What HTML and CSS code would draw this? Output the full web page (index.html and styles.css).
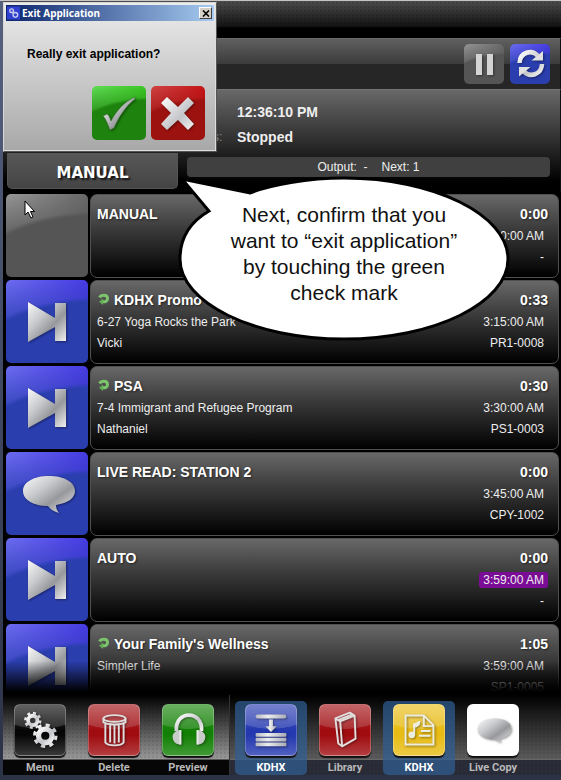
FILE: index.html
```html
<!DOCTYPE html>
<html lang="en">
<head>
<meta charset="UTF-8" />
<meta name="viewport" content="width=device-width, initial-scale=1.0" />
<title>Exit Application</title>
<link rel="stylesheet" href="styles.css">
</head>
<body>

<svg class="defs" width="0" height="0" aria-hidden="true">
  <defs>
    <linearGradient id="silver" x1="0" y1="0" x2="1" y2="1">
      <stop offset="0" stop-color="#fafafa" />
      <stop offset=".35" stop-color="#c9cacd" />
      <stop offset=".62" stop-color="#97989c" />
      <stop offset="1" stop-color="#f2f2f2" />
    </linearGradient>
    <linearGradient id="silverBar" x1="0" y1="0" x2="1" y2="0">
      <stop offset="0" stop-color="#b4b6c0" />
      <stop offset=".4" stop-color="#eeeeee" />
      <stop offset="1" stop-color="#a8aab4" />
    </linearGradient>
    <linearGradient id="silverLight" x1="0" y1="0" x2="1" y2="1">
      <stop offset="0" stop-color="#ffffff" />
      <stop offset=".6" stop-color="#c4c5c9" />
      <stop offset="1" stop-color="#f4f4f4" />
    </linearGradient>
    <symbol id="skip" viewBox="0 0 82 83">
      <path fill="url(#silver)" d="M22 22L49 38V23H60V61H49V47L22 62Z" />
    </symbol>
    <symbol id="talk" viewBox="0 0 82 83">
      <path fill="url(#silver)" d="M43 24C58 24 69 30 69 39C69 46 62 51 50 53C50 56 51 59 53 61C47 59 44 57 42 54C28 54 17 48 17 39C17 30 28 24 43 24Z" />
    </symbol>
    <symbol id="loop" viewBox="0 0 12 12">
      <path fill="none" stroke="#7cc46c" stroke-width="3" d="M1.600 4.500C3 1.500 9.500 1 9.500 5.500C9.500 8.500 7 9 4.500 8.500" />
      <path fill="#5fae52" d="M5 5.500V12L1 8.800Z" />
    </symbol>
  </defs>
</svg>

<div class="app">
  <div class="topbar"></div>

  <header class="header">
    <button class="glossy gray small" aria-label="Pause">
      <svg viewBox="0 0 40 40"><path fill="#d4d4d4" d="M12 10h6v21h-6zM23 10h6v21h-6z" /></svg>
    </button>
    <button class="glossy blue small" aria-label="Refresh">
      <svg viewBox="0 0 40 40">
        <path fill="none" stroke="url(#silverLight)" stroke-width="4.500" d="M9.500 19C10 8 22 5 28 12M32 20C31.500 31 19.500 34 13.500 27" />
        <path fill="#e0e0e0" d="M33 7V16.500H21.500ZM9 32.500V23H20.500Z" />
      </svg>
    </button>
  </header>

  <section class="info">
    <dl class="status">
      <dt>Time:</dt><dd>12:36:10 PM</dd>
      <dt>Status:</dt><dd>Stopped</dd>
    </dl>
    <div class="mode-row">
      <div class="mode">MANUAL</div>
      <div class="output"><span>Output:&nbsp; -</span><span>Next: 1</span></div>
    </div>
  </section>

  <ul class="playlist">
    <li class="row">
      <button class="glossy gray" aria-label="Manual"></button>
      <div class="card">
        <div class="details"><h2>MANUAL</h2></div>
        <div class="times"><b>0:00</b><span>3:00:00 AM</span><span>-</span></div>
      </div>
    </li>
    <li class="row">
      <button class="glossy blue" aria-label="Play next"><svg><use href="#skip" /></svg></button>
      <div class="card">
        <div class="details">
          <h2><svg class="loop"><use href="#loop" /></svg>KDHX Promo</h2>
          <p>6-27 Yoga Rocks the Park</p>
          <p>Vicki</p>
        </div>
        <div class="times"><b>0:33</b><span>3:15:00 AM</span><span>PR1-0008</span></div>
      </div>
    </li>
    <li class="row">
      <button class="glossy blue" aria-label="Play next"><svg><use href="#skip" /></svg></button>
      <div class="card">
        <div class="details">
          <h2><svg class="loop"><use href="#loop" /></svg>PSA</h2>
          <p>7-4 Immigrant and Refugee Program</p>
          <p>Nathaniel</p>
        </div>
        <div class="times"><b>0:30</b><span>3:30:00 AM</span><span>PS1-0003</span></div>
      </div>
    </li>
    <li class="row">
      <button class="glossy blue" aria-label="Read copy"><svg><use href="#talk" /></svg></button>
      <div class="card">
        <div class="details"><h2>LIVE READ: STATION 2</h2></div>
        <div class="times"><b>0:00</b><span>3:45:00 AM</span><span>CPY-1002</span></div>
      </div>
    </li>
    <li class="row">
      <button class="glossy blue" aria-label="Play next"><svg><use href="#skip" /></svg></button>
      <div class="card">
        <div class="details"><h2>AUTO</h2></div>
        <div class="times"><b>0:00</b><span class="late">3:59:00 AM</span><span>-</span></div>
      </div>
    </li>
    <li class="row">
      <button class="glossy blue" aria-label="Play next"><svg><use href="#skip" /></svg></button>
      <div class="card">
        <div class="details">
          <h2><svg class="loop"><use href="#loop" /></svg>Your Family's Wellness</h2>
          <p>Simpler Life</p>
        </div>
        <div class="times"><b>1:05</b><span>3:59:00 AM</span><span>SP1-0005</span></div>
      </div>
    </li>
  </ul>

  <nav class="toolbar">
    <div class="tools main-tools">
      <button class="tool">
        <span class="tile black"><svg viewBox="0 0 52 52">
          <g fill="none" stroke="url(#silverLight)">
            <circle cx="18.500" cy="16" r="4.800" stroke-width="4" />
            <circle cx="18.500" cy="16" r="7.500" stroke-width="3" stroke-dasharray="2.945 2.945" />
            <circle cx="31.500" cy="32" r="7" stroke-width="5.500" />
            <circle cx="31.500" cy="32" r="11" stroke-width="3.500" stroke-dasharray="4.320 4.320" />
          </g>
        </svg></span>
        Menu
      </button>
      <button class="tool">
        <span class="tile red"><svg viewBox="0 0 52 52">
          <g fill="none" stroke="#dedede" stroke-width="2">
            <ellipse cx="26.500" cy="14" rx="11.500" ry="3.500" />
            <path d="M15 14V18C19 21 34 21 38 18V14M17 19V39C20 43 33 43 36 39V19M22 21V39M26.500 21V40M31 21V39" />
          </g>
        </svg></span>
        Delete
      </button>
      <button class="tool">
        <span class="tile green"><svg viewBox="0 0 52 52">
          <path fill="none" stroke="url(#silverLight)" stroke-width="4" d="M14 27C12 5 42 5 40 27" />
          <path fill="#c8ccc8" d="M19 26V41C13 42 10 37 10 33C10 29 14 26 19 26ZM35 26V41C41 42 44 37 44 33C44 29 40 26 35 26Z" />
          <path stroke="#e8e8e8" stroke-width="2" d="M18 26V41M36 26V41" />
        </svg></span>
        Preview
      </button>
    </div>
    <div class="tools panel-tools">
      <button class="tool selected">
        <span class="tile blue-tile"><svg viewBox="0 0 52 52">
          <g fill="url(#silverBar)">
            <rect x="10" y="10" width="32" height="4" rx="2" />
            <rect x="10" y="29" width="32" height="4" rx="1" />
            <rect x="10" y="34" width="32" height="4" rx="1" />
            <rect x="10" y="39" width="32" height="4" rx="1" />
            <path d="M24 15H28V22H32L26 28L20 22H24Z" />
          </g>
        </svg></span>
        KDHX
      </button>
      <button class="tool">
        <span class="tile red"><svg viewBox="0 0 52 52">
          <path fill="none" stroke="#e2dede" stroke-width="2" stroke-linejoin="round" d="M16 14L31 8L36 11L37 35L23 43L19 40ZM16 14L21 17L23 43M21 17L36 11M18 16L33 10" />
        </svg></span>
        Library
      </button>
      <button class="tool selected">
        <span class="tile yellow"><svg viewBox="0 0 52 52">
          <path fill="none" stroke="#ededdf" stroke-width="2" d="M12 11H31L41 21V41H12ZM31 11V22H41M28 27H38M26 32H38" />
          <path fill="none" stroke="#ededdf" stroke-width="2" d="M21 31V20C24 20 26 19 27 17" />
          <path fill="#ededdf" d="M20 20L27 16V20C25 23 23 23 20 24Z" />
          <circle cx="18.500" cy="31" r="3.500" fill="#ededdf" />
        </svg></span>
        KDHX
      </button>
      <button class="tool">
        <span class="tile white"><svg viewBox="0 0 52 52">
          <path fill="url(#silver)" d="M28 14C38 14 45 18 45 25C45 30 40 34 33 35C33 37 34 38 35 39C31 38 29 37 28 36C18 36 10 32 10 25C10 18 18 14 28 14Z" />
        </svg></span>
        Live Copy
      </button>
    </div>
  </nav>
</div>

<div class="dialog" role="dialog" aria-labelledby="dialogTitle">
  <div class="titlebar">
    <svg class="app-icon" viewBox="0 0 14 14">
      <rect width="14" height="14" fill="#3040d0" />
      <g fill="none" stroke="#c8ccec" stroke-width="1.500"><circle cx="5" cy="4.500" r="2" /><circle cx="9" cy="9" r="2.500" /></g>
    </svg>
    <h1 id="dialogTitle">Exit Application</h1>
    <button class="close" aria-label="Close">
      <svg viewBox="0 0 8 7"><path fill="none" stroke="#000" stroke-width="1.600" d="M1 0.500L7 6.500M7 0.500L1 6.500" /></svg>
    </button>
  </div>
  <p class="question">Really exit application?</p>
  <div class="answers">
    <button class="glossy green answer" aria-label="Yes">
      <svg viewBox="0 0 54 54"><path fill="url(#silver)" stroke="#2a6a1c" stroke-width=".5" d="M11 30L15 28C17 29 18 32 19 35C25 24 32 16 43 11L43 13C33 21 27 31 22 42L18 44C16 39 14 33 11 30Z" /></svg>
    </button>
    <button class="glossy crimson answer" aria-label="No">
      <svg viewBox="0 0 54 54"><path fill="url(#silverLight)" d="M16 11L27 21L37 11L43 17L33 27L43 38L37 44L27 34L16 44L10 38L20 27L10 17Z" /></svg>
    </button>
  </div>
</div>

<div class="bubble">
  <svg viewBox="0 0 334 170" aria-hidden="true">
    <path fill="#fff" stroke="#000" stroke-width="3" stroke-linejoin="miter" d="M4 6L72 20C92 12 130 5 166 5C256 5 330 42 330 86C330 130 256 166 166 166C76 166 2 130 2 86C2 66 12 49 31 38Z" />
  </svg>
  <p>Next, confirm that you want to “exit application” by touching the green check mark</p>
</div>

<svg class="cursor" viewBox="0 0 12 20" aria-hidden="true">
  <path fill="#fff" stroke="#000" d="M1 1V15L4 12L7 18L9 17L6.500 11.500H10.500Z" />
</svg>

</body>
</html>
```
FILE: styles.css
```css
* {
  box-sizing: border-box;
}
body {
  margin: 0;
  background: linear-gradient(#55617f, #2c3246);
  font-family: "Liberation Sans", Arial, sans-serif;
  font-size: 12px;
  color: #eee;
}
button {
  border: none;
  padding: 0;
  font: inherit;
  color: inherit;
  cursor: pointer;
}
h1, h2, p, ul, dl, dd {
  margin: 0;
  padding: 0;
}
.defs {
  position: absolute;
}
.app {
  display: flex;
  flex-direction: column;
  height: 100vh;
  min-height: 500px;
  padding: 0 0 5px 3px;
  border-top: 1px solid #c4c4c4;
}
.topbar {
  flex: none;
  height: 37px;
  background: radial-gradient(rgba(0, 0, 0, 0.12) 1px, transparent 1px) 0 0 / 4px 4px,
              linear-gradient(#4c4c4c, #111 70%, #000 72%);
}
.header {
  display: flex;
  flex: none;
  justify-content: flex-end;
  gap: 6px;
  height: 51px;
  padding: 5px 10px 0 0;
  border-top: 1px solid #6a6a6a;
  border-right: 1px solid #111;
  background: linear-gradient(#606060, #3b3b3b 50%, #262626 51%);
}

/* shiny square buttons */
.glossy {
  --base: #2a3eae;
  --shine: #6c6cf0;
  --shine-end: #4032e0;
  flex: none;
  border-radius: 5px;
  background: radial-gradient(ellipse 162% 87% at 110% 108%, var(--base) 94%, transparent 100%),
              linear-gradient(transparent, var(--base) 65%),
              linear-gradient(100deg, var(--shine), var(--shine-end));
}
.glossy svg {
  display: block;
  width: 100%;
  height: 100%;
  filter: drop-shadow(1px 1px 1px rgba(0, 0, 0, 0.4));
}
.gray {
  --base: #555;
  --shine: #969696;
  --shine-end: #606060;
}
.green {
  --base: #1e820e;
  --shine: #62dc56;
  --shine-end: #34c41c;
}
.crimson {
  --base: #9c120f;
  --shine: #d04444;
  --shine-end: #c40c10;
}
.small {
  width: 40px;
  height: 40px;
}

.info {
  flex: none;
  border-top: 1px solid #747474;
  border-right: 1px solid #111;
  background: linear-gradient(#686868, #000 90%);
}
.status {
  display: grid;
  grid-template-columns: 222px 1fr;
  align-content: start;
  column-gap: 12px;
  height: 63px;
  padding-top: 10px;
  line-height: 25px;
}
.status dt {
  padding-left: 182px;
  color: #8a8a8a;
}
.status dd {
  font-size: 14px;
  font-weight: bold;
}
.mode-row {
  display: flex;
  align-items: flex-start;
  gap: 9px;
  padding: 0 10px 3px 4px;
}
.mode {
  width: 171px;
  height: 36px;
  border: 1px solid #555;
  border-top: none;
  border-radius: 0 0 5px 5px;
  background: linear-gradient(#585858, #444);
  font: bold 15px/40px "DejaVu Sans", Verdana, sans-serif;
  text-align: center;
  color: #fff;
  text-shadow: 2px 2px 2px #111;
}
.output {
  display: flex;
  flex: 1;
  justify-content: center;
  gap: 14px;
  margin-top: 4px;
  border-radius: 4px;
  background: #404040;
  line-height: 20px;
}

.playlist {
  display: flex;
  flex: 1;
  flex-direction: column;
  gap: 2px;
  position: relative;
  min-height: 0;
  padding: 2px 2px 0 3px;
  overflow: hidden;
  background: #000;
  list-style: none;
}
.playlist::after {
  content: "";
  position: absolute;
  inset: auto 0 0 0;
  height: 34px;
  background: linear-gradient(transparent, #000 90%);
}
.row {
  display: flex;
  flex: none;
  gap: 2px;
  height: 84px;
}
.row .glossy {
  width: 82px;
  height: 83px;
}
.card {
  display: flex;
  flex: 1;
  justify-content: space-between;
  padding: 7px 10px 0 6px;
  border: 1px solid #505050;
  border-radius: 7px;
  background: linear-gradient(#686868, #3c3c3c 40%, #000);
  line-height: 21px;
}
.card h2, .times b {
  font-size: 14px;
  font-weight: bold;
  line-height: 24px;
  color: #fff;
  text-shadow: 1px 1px 2px #222;
}
.loop {
  width: 12px;
  height: 12px;
  margin: 0 4px 0 1px;
}
.times {
  display: flex;
  flex-direction: column;
  align-items: flex-end;
}
.times span {
  padding: 0 4px;
}
.times .late {
  margin: 2px 0 3px;
  border-radius: 3px;
  background: #7a0c96;
  line-height: 16px;
}

.toolbar {
  display: flex;
  flex: none;
  background: #000;
}
.tools {
  display: flex;
  gap: 2px;
  padding: 6px 5px 0 1px;
  background: radial-gradient(rgba(0, 0, 0, 0.08) 1px, transparent 1px) 0 0 / 4px 4px,
              linear-gradient(#000, #999 64px, #555 64px, #555 65px, #060606 65px);
}
.panel-tools {
  flex: 1;
  padding-left: 5px;
  border-left: 1px solid #333;
  background: radial-gradient(rgba(0, 0, 0, 0.08) 1px, transparent 1px) 0 0 / 4px 4px,
              linear-gradient(#000, #5c5c5c 64px, #666 64px, #666 65px, #2a2d38 65px);
}
.tool {
  display: flex;
  flex-direction: column;
  align-items: center;
  gap: 4px;
  width: 72px;
  height: 74px;
  padding-top: 3px;
  border-radius: 5px;
  background: none;
  font: bold 11px/16px Roboto, Tahoma, sans-serif;
  color: #b8b8b8;
}
.selected {
  background: rgba(48, 96, 150, 0.7);
  color: #fff;
}
.tile {
  --tile: #111;
  width: 52px;
  height: 52px;
  border: 1px solid rgba(255, 255, 255, 0.25);
  border-radius: 6px;
  background: radial-gradient(ellipse 90% 48% at 50% 0, rgba(255, 255, 255, 0.15) 98%, transparent 100%),
              linear-gradient(rgba(255, 255, 255, 0.25), transparent 50%, transparent 60%, rgba(255, 255, 255, 0.2)),
              var(--tile);
  box-shadow: 0 2px 1px #111;
}
.tile svg {
  display: block;
  filter: drop-shadow(1px 1px 1px rgba(0, 0, 0, 0.4));
}
.black {
  --tile: #060606;
}
.red {
  --tile: #a00c10;
}
.tile.green {
  --tile: #128004;
}
.blue-tile {
  --tile: #2438b0;
}
.yellow {
  --tile: #e8bc14;
}
.white {
  --tile: #fff;
}

.dialog {
  position: absolute;
  top: 2px;
  left: 3px;
  width: 214px;
  height: 150px;
  padding: 2px;
  border: 1px solid #d8d8d4;
  border-right-color: #555;
  border-bottom-color: #555;
  background: linear-gradient(#ececec, #a8a8a8);
  box-shadow: inset -1px -1px 0 #ddd;
}
.titlebar {
  display: flex;
  align-items: center;
  gap: 2px;
  height: 16px;
  padding: 0 2px 0 1px;
  background: linear-gradient(90deg, #0a246a, #a6caf0);
}
.titlebar h1 {
  flex: 1;
  font: bold 10px/16px "Noto Sans", Tahoma, sans-serif;
  color: #fff;
}
.app-icon {
  width: 13px;
  height: 14px;
}
.close {
  display: flex;
  align-items: center;
  justify-content: center;
  width: 13px;
  height: 12px;
  border: 1px solid;
  border-color: #fff #404040 #404040 #fff;
  background: #d4d0c8;
}
.close svg {
  width: 8px;
  height: 7px;
}
.question {
  padding: 23px 21px 22px;
  font-size: 12px;
  font-weight: bold;
  line-height: 20px;
  color: #000;
}
.answers {
  display: flex;
  justify-content: flex-end;
  gap: 5px;
  padding-right: 9px;
}
.answer {
  width: 54px;
  height: 54px;
}

.bubble {
  position: absolute;
  top: 173px;
  left: 178px;
  width: 334px;
}
.bubble svg {
  display: block;
}
.bubble p {
  position: absolute;
  inset: 29px 48px auto 46px;
  font-size: 21px;
  line-height: 26px;
  text-align: center;
  color: #111;
}
.cursor {
  position: absolute;
  top: 200px;
  left: 24px;
  width: 12px;
  height: 20px;
}
```
